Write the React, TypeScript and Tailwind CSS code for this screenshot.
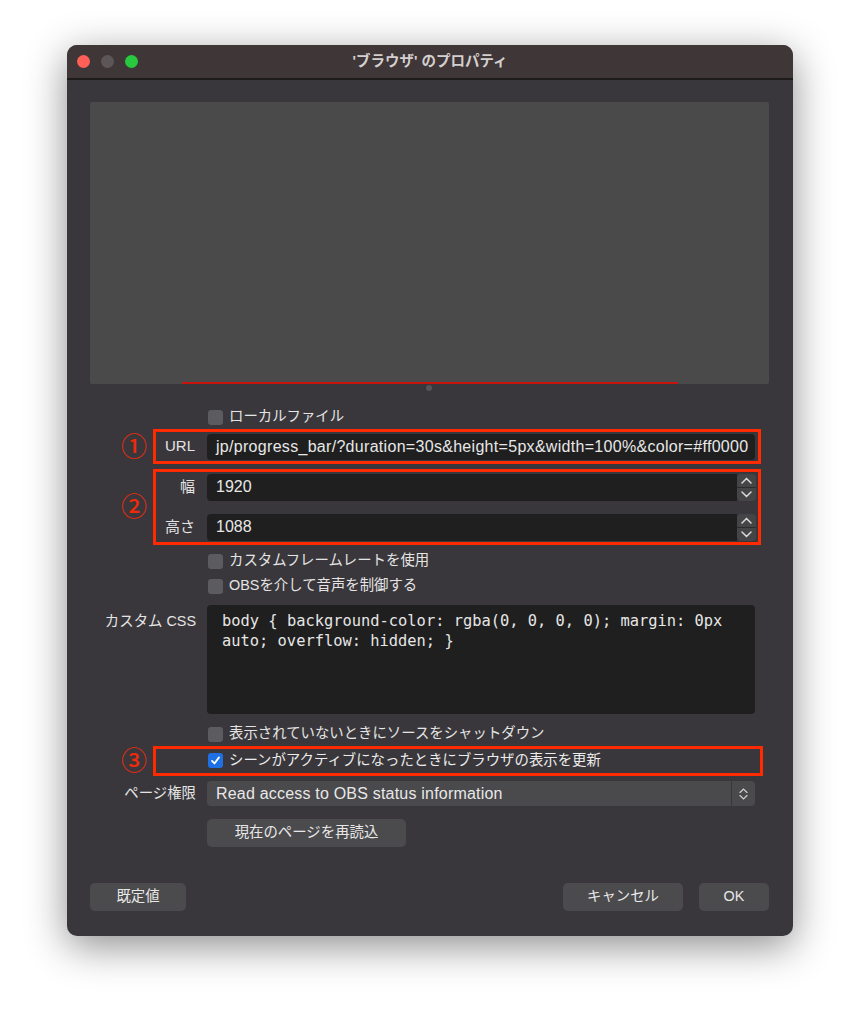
import React from "react";

const sans = "font-['Liberation_Sans','Noto_Sans_CJK_JP',sans-serif]";

function Checkbox({ checked = false }: { checked?: boolean }) {
  if (checked) {
    return (
      <span className="flex h-[15px] w-[15px] items-center justify-center rounded-[3px] bg-[#1f6fe5]">
        <svg width="11" height="11" viewBox="0 0 12 12">
          <path d="M2.2 6.4 L4.9 9.2 L9.8 2.6" fill="none" stroke="#fff" strokeWidth="2" strokeLinecap="round" strokeLinejoin="round" />
        </svg>
      </span>
    );
  }
  return <span className="h-[15px] w-[15px] rounded-[3px] bg-[#5c5b5e]" />;
}

function CheckRow({ label, checked }: { label: string; checked?: boolean }) {
  return (
    <div className="flex h-[20px] items-center gap-[6px] pl-[118px] text-[14.4px] text-[#e4e4e4]">
      <Checkbox checked={checked} />
      <span>{label}</span>
    </div>
  );
}

function Spinner() {
  return (
    <div className="flex h-[27px] w-[19px] flex-col overflow-hidden rounded-[4px] bg-[#454547]">
      <div className="flex flex-1 items-center justify-center border-b border-[#2c2c2e]">
        <svg width="11" height="7" viewBox="0 0 11 7">
          <path d="M1 6 L5.5 1.5 L10 6" fill="none" stroke="#d8d8d8" strokeWidth="1.5" strokeLinecap="round" />
        </svg>
      </div>
      <div className="flex flex-1 items-center justify-center">
        <svg width="11" height="7" viewBox="0 0 11 7">
          <path d="M1 1 L5.5 5.5 L10 1" fill="none" stroke="#d8d8d8" strokeWidth="1.5" strokeLinecap="round" />
        </svg>
      </div>
    </div>
  );
}

function Digit({ n }: { n: string }) {
  return (
    <div className="flex w-[63px] items-center justify-end pr-[6px] text-[26px] font-medium leading-none text-[#ee2a0c]">
      {n}
    </div>
  );
}

function Btn({ children, w }: { children: React.ReactNode; w: string }) {
  return (
    <div className={`flex h-[28px] items-center justify-center rounded-[5px] bg-[#4b4a4d] text-[14.4px] text-[#e8e8e8] ${w}`}>
      {children}
    </div>
  );
}

export default function App() {
  return (
    <div className={`h-[1024px] w-[860px] bg-white pl-[67px] pt-[45px] ${sans}`}>
      <div className="flex h-[891px] w-[726px] flex-col overflow-hidden rounded-[10px] bg-[#39373b] shadow-[0_10px_40px_rgba(0,0,0,0.45)]">
        {/* title bar */}
        <div className="relative flex h-[35px] items-center border-b-2 border-[#1e1b1c] bg-[#3f3637]">
          <div className="flex gap-[11px] pl-[10px]">
            <span className="h-[13px] w-[13px] rounded-full bg-[#fe5f57]" />
            <span className="h-[13px] w-[13px] rounded-full bg-[#5d5658]" />
            <span className="h-[13px] w-[13px] rounded-full bg-[#27c93f]" />
          </div>
          <div className="absolute inset-0 flex items-center justify-center text-[14.5px] font-bold text-[#d4cfcf]">
            'ブラウザ' のプロパティ
          </div>
        </div>

        <div className="flex flex-1 flex-col pb-[25px] pl-[23px] pr-[24px] pt-[22px]">
          {/* preview */}
          <div className="flex h-[282px] flex-col justify-end rounded-[2px] bg-[#4a4a4a]">
            <div className="ml-[92px] h-[2px] w-[496px] bg-[#c4140c]" />
          </div>
          <div className="flex justify-center pr-[2px] pt-[1px]">
            <span className="h-[6px] w-[6px] rounded-full bg-[#555457]" />
          </div>

          <div className="mt-[16px]">
            <CheckRow label="ローカルファイル" />
          </div>

          {/* URL */}
          <div className="mt-[2px] flex">
            <Digit n="①" />
            <div className="flex h-[35px] w-[608px] items-center border-[3px] border-[#ff2a00] pr-[3px]">
              <div className="w-[40px] pr-[1px] text-right text-[15px] text-[#e4e4e4]">URL</div>
              <div className="ml-[11px] flex h-[26px] w-[548px] items-center overflow-hidden whitespace-nowrap rounded-[4px] bg-[#1f1f1f] pl-[9px] text-[16px] tracking-[0.3px] text-[#e8e8e8]">
                jp/progress_bar/?duration=30s&amp;height=5px&amp;width=100%&amp;color=#ff0000
              </div>
            </div>
          </div>

          {/* size */}
          <div className="mt-[5px] flex">
            <Digit n="②" />
            <div className="flex h-[76px] w-[608px] flex-col justify-center gap-[13px] border-[3px] border-[#ff2a00]">
              {[
                ["幅", "1920"],
                ["高さ", "1088"],
              ].map(([l, v]) => (
                <div key={l} className="flex items-center">
                  <div className="w-[40px] pr-[1px] text-right text-[15px] text-[#e4e4e4]">{l}</div>
                  <div className="ml-[11px] flex h-[27px] w-[530px] items-center rounded-l-[4px] bg-[#1f1f1f] pl-[9px] text-[16px] text-[#e8e8e8]">
                    {v}
                  </div>
                  <Spinner />
                </div>
              ))}
            </div>
          </div>

          <div className="mt-[6px] flex flex-col gap-[5px]">
            <CheckRow label="カスタムフレームレートを使用" />
            <CheckRow label="OBSを介して音声を制御する" />
          </div>

          {/* custom css */}
          <div className="mt-[9px] flex">
            <div className="w-[106px] pt-[6px] text-right text-[14.4px] leading-[20px] text-[#e4e4e4]">カスタム CSS</div>
            <div className="ml-[11px] h-[109px] w-[548px] rounded-[4px] bg-[#1f1f1f] pl-[15px] pr-[10px] pt-[6px] font-['DejaVu_Sans_Mono',monospace] text-[15.4px] leading-[20px] text-[#e6e6e6]">
              body {"{"} background-color: rgba(0, 0, 0, 0); margin: 0px auto; overflow: hidden; {"}"}
            </div>
          </div>

          <div className="mt-[10px]">
            <CheckRow label="表示されていないときにソースをシャットダウン" />
          </div>

          {/* refresh */}
          <div className="mt-[2px] flex">
            <Digit n="③" />
            <div className="flex h-[30px] w-[610px] items-center border-[3px] border-[#ff2a00] pl-[52px]">
              <div className="flex items-center gap-[6px] text-[14.4px] text-[#ececec]">
                <Checkbox checked />
                <span>シーンがアクティブになったときにブラウザの表示を更新</span>
              </div>
            </div>
          </div>

          {/* permissions */}
          <div className="mt-[5px] flex items-center">
            <div className="w-[106px] text-right text-[14.4px] text-[#e4e4e4]">ページ権限</div>
            <div className="ml-[11px] flex h-[25px] w-[548px] items-center rounded-[4px] bg-[#4a494c] text-[16px] tracking-[0.2px] text-[#e8e8e8]">
              <span className="flex-1 pl-[9px]">Read access to OBS status information</span>
              <div className="flex h-full w-[24px] flex-col items-center justify-center gap-[2px] border-l border-[#38373a]">
                <svg width="9" height="5" viewBox="0 0 9 5">
                  <path d="M1 4.5 L4.5 1 L8 4.5" fill="none" stroke="#cfcfcf" strokeWidth="1.2" strokeLinecap="round" />
                </svg>
                <svg width="9" height="5" viewBox="0 0 9 5">
                  <path d="M1 0.5 L4.5 4 L8 0.5" fill="none" stroke="#cfcfcf" strokeWidth="1.2" strokeLinecap="round" />
                </svg>
              </div>
            </div>
          </div>

          <div className="mt-[13px] pl-[117px]">
            <Btn w="w-[199px] h-[27px]">現在のページを再読込</Btn>
          </div>

          {/* bottom buttons */}
          <div className="mt-auto flex items-center">
            <Btn w="w-[96px]">既定値</Btn>
            <div className="flex-1" />
            <Btn w="w-[120px]">キャンセル</Btn>
            <div className="w-[16px]" />
            <Btn w="w-[70px]">OK</Btn>
          </div>
        </div>
      </div>
    </div>
  );
}
